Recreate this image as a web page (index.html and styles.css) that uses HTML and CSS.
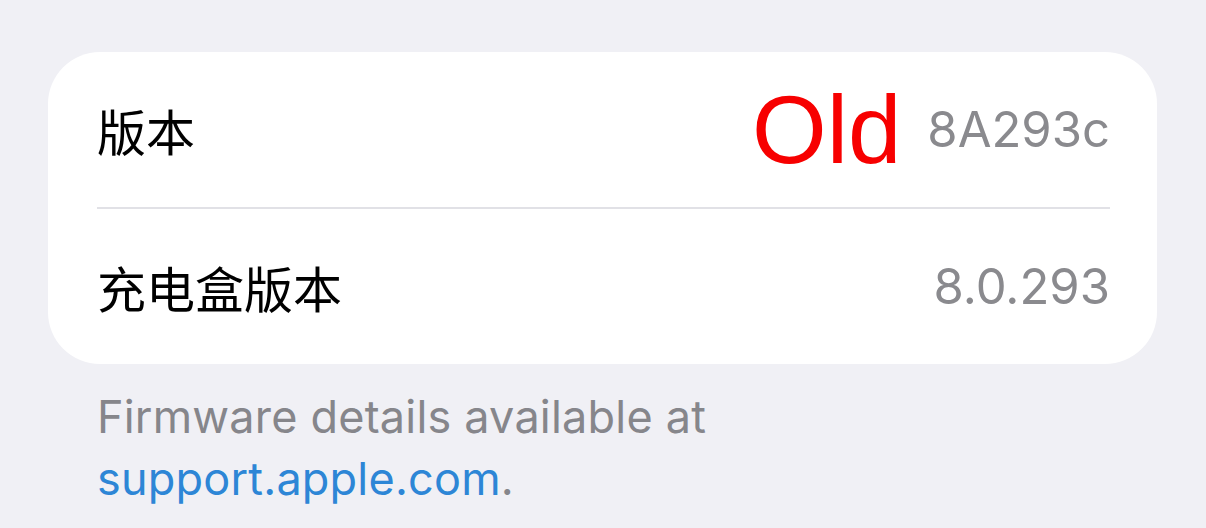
FILE: index.html
```html
<!DOCTYPE html>
<html lang="zh-CN">
<head>
    <meta charset="UTF-8">
    <meta name="viewport" content="width=device-width, initial-scale=1.0">
    <title>版本</title>
    <link rel="stylesheet" href="styles.css">
</head>
<body>
    <!-- Version card -->
    <div class="card">
        <div class="row">
            <span class="label">版本</span>
            <div class="values">
                <span class="old">Old</span>
                <span class="value">8A293c</span>
            </div>
        </div>
        <div class="row">
            <span class="label">充电盒版本</span>
            <span class="value">8.0.293</span>
        </div>
    </div>

    <!-- Footer note -->
    <p class="footer">
        Firmware details available at<br>
        <a href="#">support.apple.com</a>.
    </p>
</body>
</html>
```

FILE: styles.css
```css
/* Global Styles */
* {
    margin: 0;
    padding: 0;
    box-sizing: border-box;
}

body {
    background: #f0f0f5;
    font-family: Inter, "Noto Sans CJK SC", sans-serif;
    padding: 52px 49px 0 48px;
}

/* Card */
.card {
    background: #ffffff;
    border-radius: 52px;
    padding: 0 47px 0 49px;
}

.row {
    display: flex;
    justify-content: space-between;
    align-items: center;
    height: 155px;
}

.row + .row {
    height: 157px;
    border-top: 2px solid #e1e1e6;
}

.label {
    font-family: "Noto Sans CJK SC", sans-serif;
    font-size: 49px;
    color: #000000;
}

.values {
    display: flex;
    align-items: center;
    gap: 26px;
}

.old {
    font-family: "Liberation Sans", Arial, sans-serif;
    font-size: 96px;
    line-height: 1;
    color: #f70000;
}

.value {
    font-size: 49px;
    color: #8a8a8e;
}

/* Footer */
.footer {
    margin-top: 22px;
    padding-left: 49px;
    font-size: 45px;
    line-height: 62px;
    letter-spacing: 0.2px;
    color: #86868b;
}

.footer a {
    color: #2d86d6;
    text-decoration: none;
}
```
